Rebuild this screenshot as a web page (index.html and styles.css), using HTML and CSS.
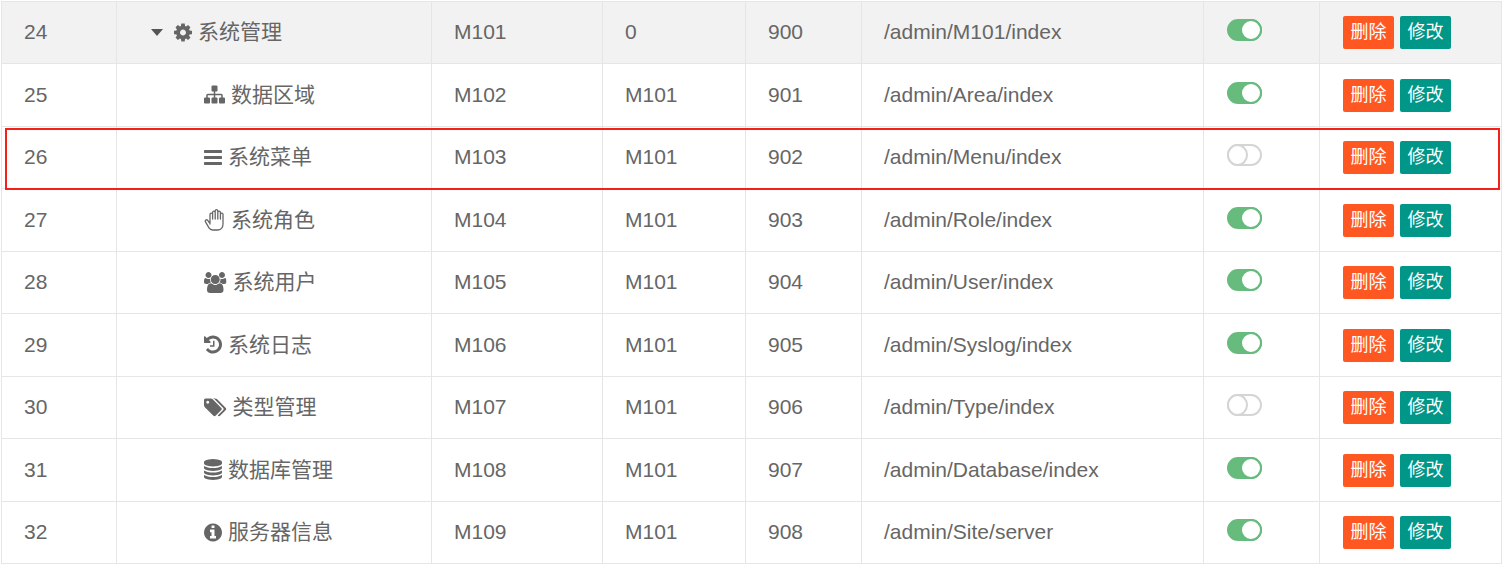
FILE: index.html
```html
<!DOCTYPE html>
<html lang="zh">
<head>
<meta charset="utf-8">
<title>菜单管理</title>
<link rel="stylesheet" href="styles.css">
</head>
<body>
<svg class="sprites" width="0" height="0" aria-hidden="true">
<symbol id="i-gear" viewBox="128 0 1536 1792"><path d="M1152 896q0-106-75-181t-181-75-181 75-75 181 75 181 181 75 181-75 75-181zm512-109v222q0 12-8 23t-20 13l-185 28q-19 54-39 91 35 50 107 138 10 12 10 25t-9 23q-27 37-99 108t-94 71q-12 0-26-9l-138-108q-44 23-91 38-16 136-29 186-7 28-36 28h-222q-14 0-24.500-8.500t-11.500-21.500l-28-184q-49-16-90-37l-141 107q-10 9-25 9-14 0-25-11-126-114-165-168-7-10-7-23 0-12 8-23 15-21 51-66.500t54-70.500q-27-50-41-99l-183-27q-13-2-21-12.500t-8-23.500v-222q0-12 8-23t19-13l186-28q14-46 39-92-40-57-107-138-10-12-10-24 0-10 9-23 26-36 98.500-107.500t94.500-71.500q13 0 26 10l138 107q44-23 91-38 16-136 29-186 7-28 36-28h222q14 0 24.500 8.500t11.500 21.500l28 184q49 16 90 37l142-107q9-9 24-9 13 0 25 10 129 119 165 170 7 8 7 22 0 12-8 23-15 21-51 66.500t-54 70.500q26 50 41 98l183 28q13 2 21 12.500t8 23.500z"/></symbol>
<symbol id="i-sitemap" viewBox="0 0 1792 1792"><path d="M1792 1248v320q0 40-28 68t-68 28h-320q-40 0-68-28t-28-68v-320q0-40 28-68t68-28h96v-192h-512v192h96q40 0 68 28t28 68v320q0 40-28 68t-68 28h-320q-40 0-68-28t-28-68v-320q0-40 28-68t68-28h96v-192h-512v192h96q40 0 68 28t28 68v320q0 40-28 68t-68 28h-320q-40 0-68-28t-28-68v-320q0-40 28-68t68-28h96v-192q0-52 38-90t90-38h512v-192h-96q-40 0-68-28t-28-68v-320q0-40 28-68t68-28h320q40 0 68 28t28 68v320q0 40-28 68t-68 28h-96v192h512q52 0 90 38t38 90v192h96q40 0 68 28t28 68z"/></symbol>
<symbol id="i-bars" viewBox="128 0 1536 1792"><path d="M1664 1344v128q0 26-19 45t-45 19h-1408q-26 0-45-19t-19-45v-128q0-26 19-45t45-19h1408q26 0 45 19t19 45zm0-512v128q0 26-19 45t-45 19h-1408q-26 0-45-19t-19-45v-128q0-26 19-45t45-19h1408q26 0 45 19t19 45zm0-512v128q0 26-19 45t-45 19h-1408q-26 0-45-19t-19-45v-128q0-26 19-45t45-19h1408q26 0 45 19t19 45z"/></symbol>
<symbol id="i-hand" viewBox="0 0 21 23"><path fill="none" stroke="currentColor" stroke-width="1.300" stroke-linejoin="round" stroke-linecap="round" d="M5.300 14.500 3.700 12.400C2.600 11 .6 12.400 1.500 13.900l3.500 6c.9 1.400 2.200 2.100 3.500 2.100h5c3.300 0 5.500-2.500 5.500-6V6.500a1.300 1.300 0 0 0-2.600 0V11M16.400 11V4.500a1.300 1.300 0 0 0-2.600 0V11M13.800 11V3a1.300 1.300 0 0 0-2.600 0v8M11.200 11V4.500a1.300 1.300 0 0 0-2.600 0V11M8.600 11V6.500a1.300 1.300 0 0 0-2.600 0v9.500"/></symbol>
<symbol id="i-users" viewBox="0 0 1920 1792"><path d="M593 896q-162 5-265 128h-134q-82 0-138-40.500t-56-118.500q0-353 124-353 6 0 43.500 21t97.500 42.500 119 21.500q67 0 133-23-5 37-5 66 0 139 81 256zm1071 637q0 120-73 189.500t-194 69.500h-874q-121 0-194-69.500t-73-189.500q0-53 3.500-103.500t14-109 26.500-108.500 43-97.500 62-81 85.500-53.500 111.500-20q10 0 43 21.500t73 48 107 48 135 21.500 135-21.500 107-48 73-48 43-21.500q61 0 111.500 20t85.500 53.500 62 81 43 97.500 26.500 108.500 14 109 3.500 103.500zm-1024-1277q0 106-75 181t-181 75-181-75-75-181 75-181 181-75 181 75 75 181zm704 384q0 159-112.500 271.500t-271.500 112.500-271.500-112.500-112.500-271.500 112.500-271.500 271.500-112.500 271.500 112.500 112.500 271.500zm576 225q0 78-56 118.500t-138 40.500h-134q-103-123-265-128 81-117 81-256 0-29-5-66 66 23 133 23 59 0 119-21.500t97.500-42.500 43.500-21q124 0 124 353zm-128-609q0 106-75 181t-181 75-181-75-75-181 75-181 181-75 181 75 75 181z"/></symbol>
<symbol id="i-history" viewBox="128 0 1536 1792"><path d="M1664 896q0 156-61 298t-164 245-245 164-298 61q-172 0-327-72.500t-264-204.500q-7-10-6.500-22.500t8.500-20.500l137-138q10-9 25-9 16 2 23 12 73 95 179 147t225 52q104 0 198.500-40.500t163.500-109.500 109.500-163.500 40.500-198.500-40.500-198.500-109.500-163.500-163.500-109.500-198.500-40.500q-98 0-188 35.500t-160 101.500l137 138q31 30 14 69-17 40-59 40h-448q-26 0-45-19t-19-45v-448q0-42 40-59 39-17 69 14l130 129q107-101 244.500-156.500t284.500-55.500q156 0 298 61t245 164 164 245 61 298zm-640-288v448q0 14-9 23t-23 9h-320q-14 0-23-9t-9-23v-64q0-14 9-23t23-9h224v-352q0-14 9-23t23-9h64q14 0 23 9t9 23z"/></symbol>
<symbol id="i-tags" viewBox="0 0 1920 1792"><path d="M448 448q0-53-37.500-90.500t-90.500-37.500-90.500 37.500-37.500 90.500 37.500 90.500 90.500 37.500 90.500-37.500 37.500-90.500zm1067 576q0 53-37 90l-491 492q-39 37-91 37-53 0-90-37l-715-716q-38-37-64.500-101t-26.500-117v-416q0-52 38-90t90-38h416q53 0 117 26.500t102 64.500l715 714q37 39 37 91zm384 0q0 53-37 90l-491 492q-39 37-91 37-36 0-59-14t-53-45l470-470q37-37 37-90 0-52-37-91l-715-714q-38-38-102-64.500t-117-26.500h224q53 0 117 26.500t102 64.500l715 714q37 39 37 91z"/></symbol>
<symbol id="i-db" viewBox="128 0 1536 1792"><path d="M896 768q237 0 443-43t325-127v170q0 69-103 128t-280 93.500-385 34.500-385-34.500-280-93.500-103-128v-170q119 84 325 127t443 43zm0 768q237 0 443-43t325-127v170q0 69-103 128t-280 93.500-385 34.500-385-34.500-280-93.500-103-128v-170q119 84 325 127t443 43zm0-384q237 0 443-43t325-127v170q0 69-103 128t-280 93.500-385 34.500-385-34.500-280-93.500-103-128v-170q119 84 325 127t443 43zm0-1152q208 0 385 34.500t280 93.500 103 128v128q0 69-103 128t-280 93.500-385 34.500-385-34.500-280-93.500-103-128v-128q0-69 103-128t280-93.500 385-34.500z"/></symbol>
<symbol id="i-info" viewBox="128 0 1536 1792"><path d="M1152 1376v-160q0-14-9-23t-23-9h-96v-512q0-14-9-23t-23-9h-320q-14 0-23 9t-9 23v160q0 14 9 23t23 9h96v320h-96q-14 0-23 9t-9 23v160q0 14 9 23t23 9h448q14 0 23-9t9-23zm-128-896v-160q0-14-9-23t-23-9h-192q-14 0-23 9t-9 23v160q0 14 9 23t23 9h192q14 0 23-9t9-23zm640 416q0 209-103 385.500t-279.500 279.500-385.500 103-385.500-103-279.500-279.500-103-385.500 103-385.500 279.500-279.500 385.500-103 385.500 103 279.500 279.500 103 385.500z"/></symbol>
</svg>
<main class="page">
<table class="grid">
<colgroup><col class="c1"><col class="c2"><col class="c3"><col class="c4"><col class="c5"><col class="c6"><col class="c7"><col class="c8"></colgroup>
<tbody>
<tr class="hl"><td>24</td><td><div class="name root"><span class="caret"></span><svg class="ic gear"><use href="#i-gear"/></svg><span>系统管理</span></div></td><td>M101</td><td>0</td><td>900</td><td>/admin/M101/index</td><td><span class="sw on"></span></td><td><div class="ops"><span class="btn del">删除</span><span class="btn edit">修改</span></div></td></tr>
<tr><td>25</td><td><div class="name"><svg class="ic wide"><use href="#i-sitemap"/></svg><span>数据区域</span></div></td><td>M102</td><td>M101</td><td>901</td><td>/admin/Area/index</td><td><span class="sw on"></span></td><td><div class="ops"><span class="btn del">删除</span><span class="btn edit">修改</span></div></td></tr>
<tr><td>26</td><td><div class="name"><svg class="ic"><use href="#i-bars"/></svg><span>系统菜单</span></div></td><td>M103</td><td>M101</td><td>902</td><td>/admin/Menu/index</td><td><span class="sw"></span></td><td><div class="ops"><span class="btn del">删除</span><span class="btn edit">修改</span></div></td></tr>
<tr><td>27</td><td><div class="name"><svg class="ic hand"><use href="#i-hand"/></svg><span>系统角色</span></div></td><td>M104</td><td>M101</td><td>903</td><td>/admin/Role/index</td><td><span class="sw on"></span></td><td><div class="ops"><span class="btn del">删除</span><span class="btn edit">修改</span></div></td></tr>
<tr><td>28</td><td><div class="name"><svg class="ic xwide"><use href="#i-users"/></svg><span>系统用户</span></div></td><td>M105</td><td>M101</td><td>904</td><td>/admin/User/index</td><td><span class="sw on"></span></td><td><div class="ops"><span class="btn del">删除</span><span class="btn edit">修改</span></div></td></tr>
<tr><td>29</td><td><div class="name"><svg class="ic"><use href="#i-history"/></svg><span>系统日志</span></div></td><td>M106</td><td>M101</td><td>905</td><td>/admin/Syslog/index</td><td><span class="sw on"></span></td><td><div class="ops"><span class="btn del">删除</span><span class="btn edit">修改</span></div></td></tr>
<tr><td>30</td><td><div class="name"><svg class="ic xwide"><use href="#i-tags"/></svg><span>类型管理</span></div></td><td>M107</td><td>M101</td><td>906</td><td>/admin/Type/index</td><td><span class="sw"></span></td><td><div class="ops"><span class="btn del">删除</span><span class="btn edit">修改</span></div></td></tr>
<tr><td>31</td><td><div class="name"><svg class="ic"><use href="#i-db"/></svg><span>数据库管理</span></div></td><td>M108</td><td>M101</td><td>907</td><td>/admin/Database/index</td><td><span class="sw on"></span></td><td><div class="ops"><span class="btn del">删除</span><span class="btn edit">修改</span></div></td></tr>
<tr><td>32</td><td><div class="name"><svg class="ic"><use href="#i-info"/></svg><span>服务器信息</span></div></td><td>M109</td><td>M101</td><td>908</td><td>/admin/Site/server</td><td><span class="sw on"></span></td><td><div class="ops"><span class="btn del">删除</span><span class="btn edit">修改</span></div></td></tr>
</tbody>
</table>
<div class="redbox"></div>
</main>
</body>
</html>
```
FILE: styles.css
```css
*, *::after { box-sizing: border-box; }
html, body { margin: 0; padding: 0; background: #fff; }
body { font-family: "Liberation Sans", "Noto Sans CJK SC", sans-serif; font-size: 21px; color: #666; overflow: hidden; height: 584px; }
.sprites { position: absolute; }
.page { position: relative; width: 1502px; padding-top: 0.6px; }
.grid { border-collapse: collapse; table-layout: fixed; width: 1500px; margin-left: 1px; }
.c1 { width: 115px; } .c2 { width: 315px; } .c3 { width: 171px; } .c4 { width: 143px; }
.c5 { width: 116px; } .c6 { width: 342px; } .c7 { width: 116px; } .c8 { width: 182px; }
.grid td { border: 1px solid #e6e6e6; height: 62.500px; padding: 0 22px; white-space: nowrap; line-height: 24px; }
.hl td { background: #f2f2f2; }
.name { display: flex; align-items: center; padding-left: 65px; gap: 6px; }
.name.root { padding-left: 12px; }
.caret { width: 12px; height: 7px; border: 6px solid transparent; border-top: 7px solid #555; border-bottom: 0; margin-right: 5px; }
.ic { width: 18px; height: 21px; fill: currentColor; color: #666; flex: none; }
.ic.wide { width: 21px; }
.ic.xwide { width: 22.500px; }
.ic.hand { width: 21px; height: 23px; }
.sw { display: block; width: 35px; height: 22px; margin: 0 0 4.400px 1px; border: 2px solid #66bb7d; background: #66bb7d; border-radius: 11px; position: relative; }
.sw::after { content: ""; position: absolute; top: -2px; left: -2px; width: 21px; height: 22px; border-radius: 50%; border: 2px solid #d5d5d5; background: #fff; }
.sw.on::after { left: 11px; width: 22px; border-color: #66bb7d; }
.sw:not(.on) { background: #fff; border-color: #d5d5d5; }
.ops { display: flex; gap: 6px; margin-left: 1px; padding-top: 0.400px; }
.btn { display: block; height: 33px; line-height: 33px; padding: 0 7.500px; color: #fff; font-size: 18px; border-radius: 2px; }
.del { background: #ff5722; }
.edit { background: #009688; }
.redbox { position: absolute; left: 5px; top: 128px; width: 1495px; height: 62px; border: 2px solid #f5201a; }
```
